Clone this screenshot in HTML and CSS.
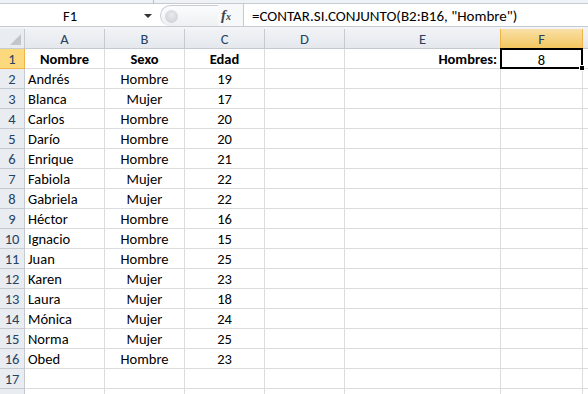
FILE: index.html
```html
<!DOCTYPE html>
<html lang="es">
<head>
    <meta charset="UTF-8">
    <title>Libro1</title>
    <link rel="stylesheet" href="styles.css">
</head>
<body>
    <div class="topline"><span class="tick"></span></div>
    <div class="formula-bar">
        <div class="name-box">F1</div>
        <div class="name-arrow"></div>
        <div class="grip"><span class="knob"></span></div>
        <div class="fx">f<span>x</span></div>
        <div class="formula">=CONTAR.SI.CONJUNTO(B2:B16, "Hombre")</div>
    </div>
    <div class="gap"></div>

    <div class="sheet">
        <div class="corner"><span class="tri"></span></div>
        <div class="col-head">A</div>
        <div class="col-head">B</div>
        <div class="col-head">C</div>
        <div class="col-head">D</div>
        <div class="col-head">E</div>
        <div class="col-head active">F</div>
        <div class="col-head last"></div>

        <div class="row-head active">1</div>
        <div class="cell bold center">Nombre</div>
        <div class="cell bold center">Sexo</div>
        <div class="cell bold center">Edad</div>
        <div class="cell"></div>
        <div class="cell bold right">Hombres:</div>
        <div class="cell center selected">8<span class="handle"></span></div>
        <div class="cell"></div>
    </div>
    <div class="sheet" id="rows"></div>

    <script>
        const people = [
            ['Andrés', 'Hombre', 19], ['Blanca', 'Mujer', 17], ['Carlos', 'Hombre', 20],
            ['Darío', 'Hombre', 20], ['Enrique', 'Hombre', 21], ['Fabiola', 'Mujer', 22],
            ['Gabriela', 'Mujer', 22], ['Héctor', 'Hombre', 16], ['Ignacio', 'Hombre', 15],
            ['Juan', 'Hombre', 25], ['Karen', 'Mujer', 23], ['Laura', 'Mujer', 18],
            ['Mónica', 'Mujer', 24], ['Norma', 'Mujer', 25], ['Obed', 'Hombre', 23],
            ['', '', ''], ['', '', '']
        ];
        const rows = document.getElementById('rows');
        let html = '';
        people.forEach((p, i) => {
            // row 18 only peeks in at the bottom edge, its number stays hidden
            const label = i + 2 < 18 ? i + 2 : '';
            html += `<div class="row-head">${label}</div>`;
            html += `<div class="cell">${p[0]}</div>`;
            html += `<div class="cell center">${p[1]}</div>`;
            html += `<div class="cell center">${p[2]}</div>`;
            html += '<div class="cell"></div><div class="cell"></div><div class="cell"></div><div class="cell"></div>';
        });
        rows.innerHTML = html;
    </script>
</body>
</html>
```

FILE: styles.css
```css
* {
    margin: 0;
    padding: 0;
    box-sizing: border-box;
}

body {
    width: 588px;
    height: 394px;
    overflow: hidden;
    background: #fff;
    font-family: Carlito, Lato, 'Liberation Sans', sans-serif;
    font-size: 14.5px;
    color: #000;
}

.topline {
    height: 4px;
    background: #eef1f5;
    border-bottom: 1px solid #c6cbd2;
    position: relative;
}

.tick {
    position: absolute;
    left: 153px;
    top: 0;
    width: 1px;
    height: 4px;
    background: #b9bec6;
}

.formula-bar {
    height: 23px;
    display: flex;
    align-items: stretch;
    background: #fff;
    border-bottom: 1px solid #c6cbd2;
}

.name-box {
    width: 140px;
    text-align: center;
    line-height: 24px;
    font-size: 14.5px;
}

.name-arrow {
    width: 18px;
    position: relative;
}

.name-arrow::after {
    content: '';
    position: absolute;
    left: 4px;
    top: 10px;
    border-left: 4px solid transparent;
    border-right: 4px solid transparent;
    border-top: 4px solid #333;
}

.grip {
    width: 58px;
    margin: 1px 0 0 2px;
    border: 1px solid #c9cdd3;
    border-right: none;
    border-bottom: none;
    border-radius: 11px 0 0 11px;
    background: linear-gradient(#fbfcfd, #eef0f3);
    position: relative;
}

.knob {
    position: absolute;
    left: 4px;
    top: 4px;
    width: 13px;
    height: 13px;
    border-radius: 50%;
    background: radial-gradient(circle at 50% 40%, #e8eaed, #c8ccd2);
}

.fx {
    width: 25px;
    background: #f7f8fa;
    font-family: 'Liberation Serif', serif;
    font-style: italic;
    font-weight: bold;
    font-size: 15px;
    line-height: 22px;
    color: #444;
    text-align: left;
    padding-left: 3px;
}

.fx span {
    font-size: 10px;
}

.formula {
    flex: 1;
    border-left: 1px solid #c6cbd2;
    line-height: 24px;
    padding-left: 8px;
    font-size: 15px;
    white-space: nowrap;
}

.gap {
    height: 2px;
    background: #f2f4f7;
}

.sheet {
    display: grid;
    grid-template-columns: 25px 80px 80px 80px 80px 156px 82px 1fr;
    grid-auto-rows: 20px;
}

.corner {
    background: #e9ecf0;
    border-right: 1px solid #c5cad1;
    border-bottom: 1px solid #c5cad1;
    position: relative;
}

.tri {
    position: absolute;
    right: 3px;
    bottom: 3px;
    border-left: 11px solid transparent;
    border-bottom: 11px solid #c2c6cc;
}

.col-head {
    background: linear-gradient(#f1f3f6, #e4e8ed);
    border-right: 1px solid #c5cad1;
    border-bottom: 1px solid #c5cad1;
    text-align: center;
    padding-top: 2px;
    line-height: 17px;
    color: #27415f;
}

.col-head.active {
    background: linear-gradient(#f9e0a6, #f3c75f);
    border-right-color: #f0b44a;
    border-bottom-color: #f0b44a;
    border-left: 1px solid #f0b44a;
    margin-left: -1px;
}

.col-head.last {
    border-right: none;
}

.row-head {
    background: #e9ecf0;
    border-right: 1px solid #c5cad1;
    border-bottom: 1px solid #c5cad1;
    text-align: center;
    padding-top: 2px;
    line-height: 17px;
    color: #27415f;
}

.row-head.active {
    background: #fbd97c;
    border-right-color: #f0b44a;
    border-bottom-color: #f0b44a;
}

.cell {
    border-right: 1px solid #dadcdd;
    border-bottom: 1px solid #dadcdd;
    padding: 2px 3px 0;
    line-height: 17px;
    white-space: nowrap;
    overflow: hidden;
}

.bold {
    font-weight: bold;
}

.center {
    text-align: center;
}

.right {
    text-align: right;
}

.selected {
    position: relative;
    overflow: visible;
    border: 2px solid #000;
    margin: -1px 0 0 -1px;
    padding-top: 2px;
    line-height: 16px;
    height: 21px;
    width: 83px;
}

.handle {
    position: absolute;
    right: -4px;
    bottom: -4px;
    width: 6px;
    height: 6px;
    background: #000;
    border: 1px solid #fff;
}
```
